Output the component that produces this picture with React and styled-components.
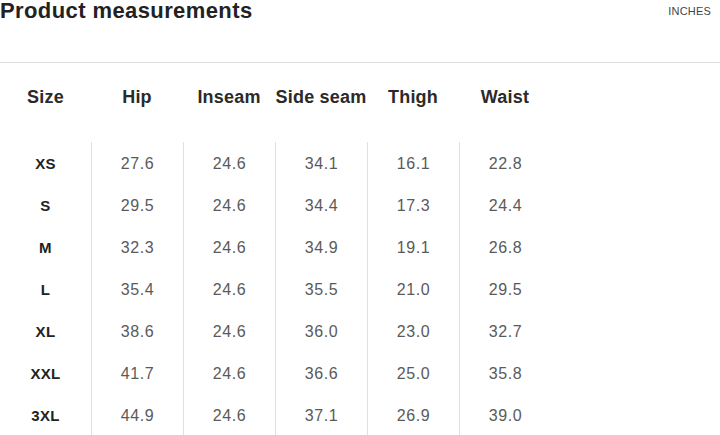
import React from 'react'
import styled, { createGlobalStyle } from 'styled-components'

const GlobalStyle = createGlobalStyle`
  body {
    margin: 0;
    background: #ffffff;
    font-family: "Liberation Sans", Arial, sans-serif;
  }
`

const Page = styled.div`
  width: 720px;
  height: 435px;
  overflow: hidden;
  background: #fff;
`

const TopBar = styled.div`
  display: flex;
  justify-content: space-between;
  align-items: flex-start;
  height: 62px;
  border-bottom: 1px solid #dcdcdc;
`

const Title = styled.h2`
  margin: 0;
  font-size: 22px;
  line-height: 22px;
  font-weight: 700;
  color: #222;
  letter-spacing: 0.4px;
`

const Unit = styled.span`
  font-size: 11px;
  line-height: 22px;
  color: #444;
  margin-right: 9px;
  letter-spacing: 0.2px;
`

const Table = styled.div`
  display: grid;
  grid-template-columns: 91px repeat(5, 92px);
`

const HeadCell = styled.div`
  height: 69px;
  display: flex;
  align-items: center;
  justify-content: center;
  font-size: 18px;
  font-weight: 700;
  color: #2a2a2a;
  white-space: nowrap;
  letter-spacing: 0.2px;
`

const Body = styled.div`
  display: grid;
  grid-template-columns: 91px repeat(5, 92px);
  padding-top: 10px;
`

const Cell = styled.div`
  height: 42px;
  display: flex;
  align-items: center;
  justify-content: center;
  font-size: ${p => (p.$label ? '15px' : '16px')};
  font-weight: ${p => (p.$label ? 700 : 400)};
  color: ${p => (p.$label ? '#222' : '#5a5a5a')};
  letter-spacing: ${p => (p.$label ? '0.3px' : '0.6px')};
  border-left: ${p => (p.$label ? 'none' : '1px solid #e0e0e0')};
  box-sizing: border-box;
  padding-top: ${p => (p.$label ? '0' : '2px')};
`

const headers = ['Size', 'Hip', 'Inseam', 'Side seam', 'Thigh', 'Waist']

const rows = [
  ['XS', '27.6', '24.6', '34.1', '16.1', '22.8'],
  ['S', '29.5', '24.6', '34.4', '17.3', '24.4'],
  ['M', '32.3', '24.6', '34.9', '19.1', '26.8'],
  ['L', '35.4', '24.6', '35.5', '21.0', '29.5'],
  ['XL', '38.6', '24.6', '36.0', '23.0', '32.7'],
  ['XXL', '41.7', '24.6', '36.6', '25.0', '35.8'],
  ['3XL', '44.9', '24.6', '37.1', '26.9', '39.0'],
]

export default function App() {
  return (
    <Page>
      <GlobalStyle />
      <TopBar>
        <Title>Product measurements</Title>
        <Unit>INCHES</Unit>
      </TopBar>
      <Table>
        {headers.map(h => (
          <HeadCell key={h}>{h}</HeadCell>
        ))}
      </Table>
      <Body>
        {rows.map(r =>
          r.map((v, i) => (
            <Cell key={r[0] + i} $label={i === 0}>
              {v}
            </Cell>
          ))
        )}
      </Body>
    </Page>
  )
}
